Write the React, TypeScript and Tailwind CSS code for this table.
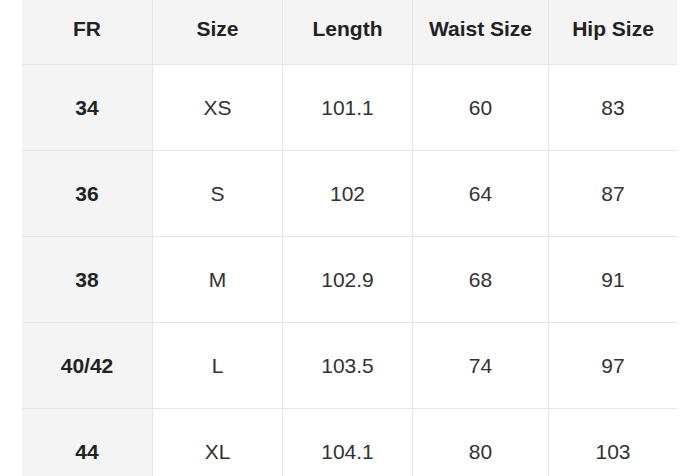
const headers = ['FR', 'Size', 'Length', 'Waist Size', 'Hip Size']

const rows = [
  ['34', 'XS', '101.1', '60', '83'],
  ['36', 'S', '102', '64', '87'],
  ['38', 'M', '102.9', '68', '91'],
  ['40/42', 'L', '103.5', '74', '97'],
  ['44', 'XL', '104.1', '80', '103'],
]

export default function App() {
  return (
    <div className="w-[700px] h-[476px] overflow-hidden bg-white font-['Liberation_Sans',Arial,sans-serif] text-[21px] leading-[24px]">
      <div className="ml-[22px] w-[655px] grid grid-cols-[131px_130px_130px_136px_128px]">
        {headers.map((h, i) => (
          <div
            key={h}
            className={`h-[65px] pt-[17px] bg-[#f4f4f4] text-center font-bold text-[#222] border-b border-[#e6e6e6] ${i < 4 ? 'border-r' : ''}`}
          >
            {h}
          </div>
        ))}
        {rows.map((r) =>
          r.map((c, i) => (
            <div
              key={r[0] + i}
              className={`h-[86px] flex items-center justify-center border-b border-[#e6e6e6] ${i < 4 ? 'border-r' : ''} ${i == 0 ? 'bg-[#f4f4f4] font-bold text-[#222]' : 'text-[#333]'}`}
            >
              {c}
            </div>
          ))
        )}
      </div>
    </div>
  )
}
